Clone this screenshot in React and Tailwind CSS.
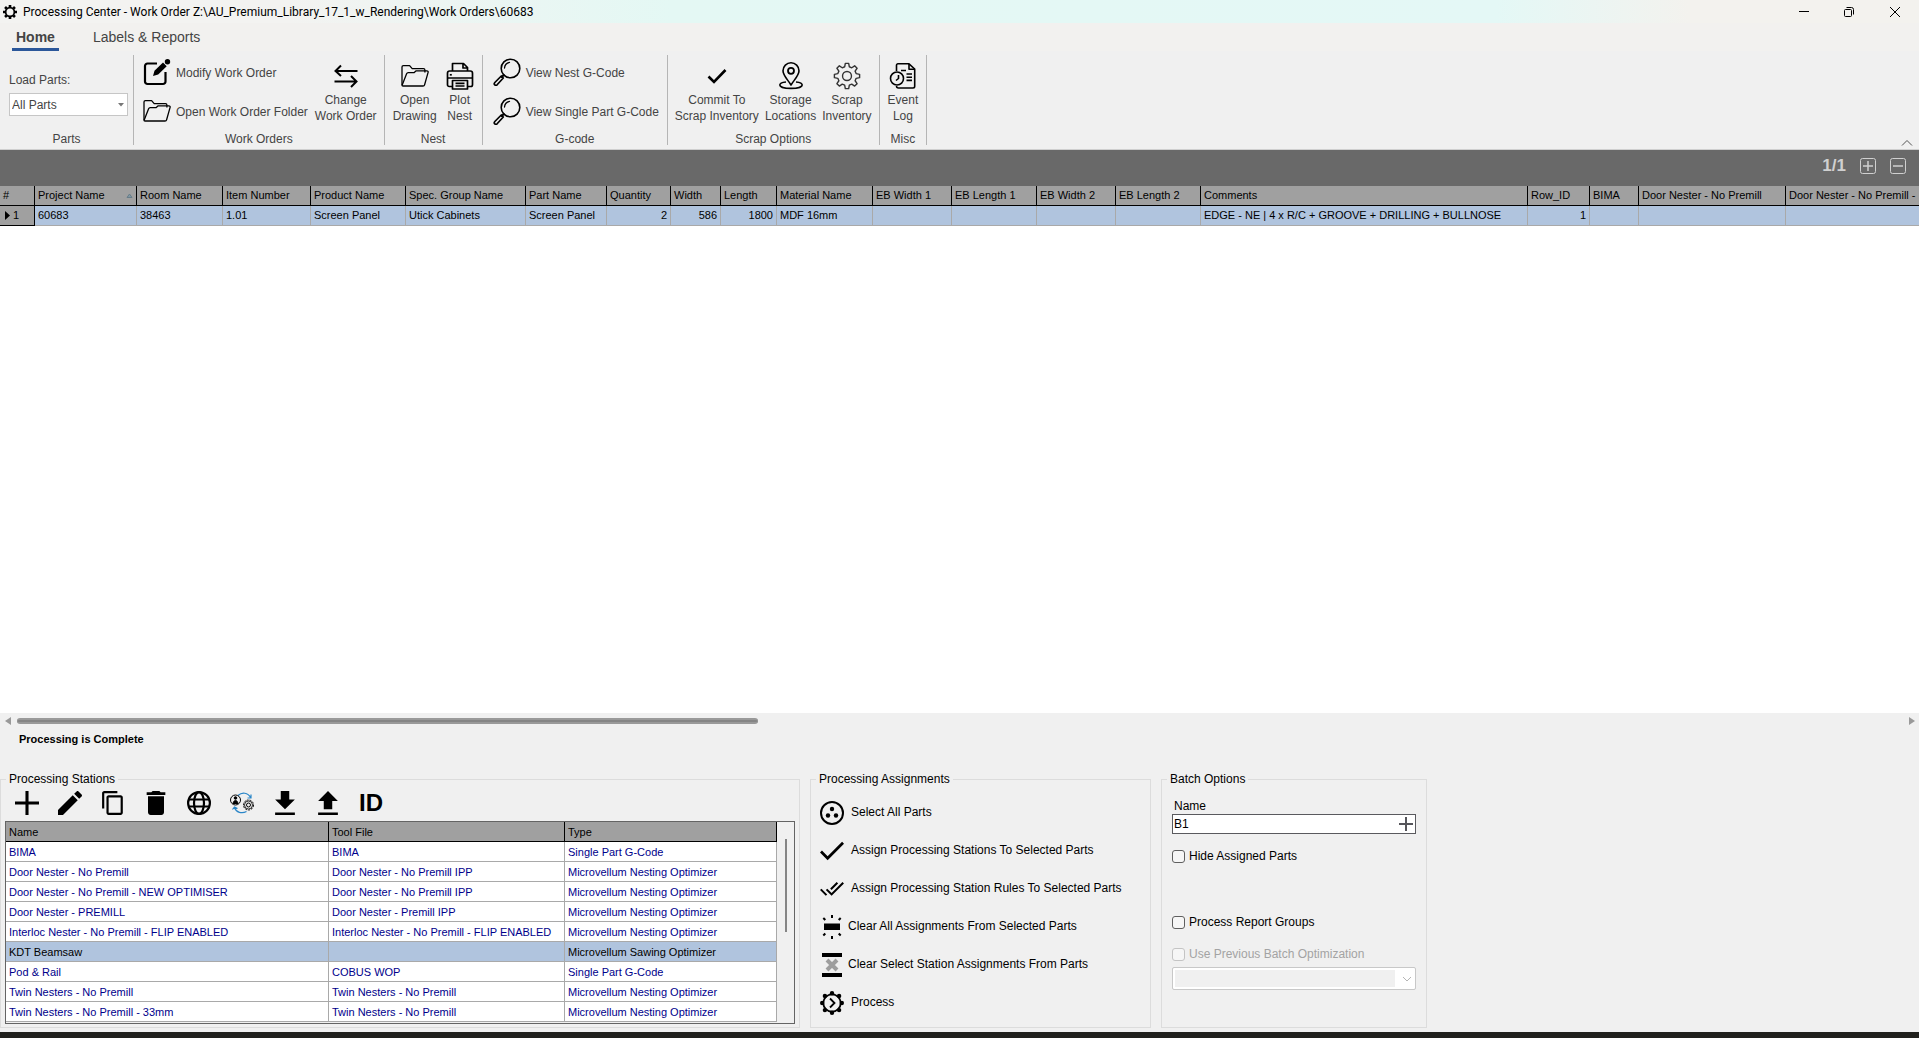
import React from "react";

const partColumns = [
  { label: "#", value: "1", width: "w-[35px]", marker: true },
  { label: "Project Name", value: "60683", width: "w-[102px]", sorted: true },
  { label: "Room Name", value: "38463", width: "w-[86px]" },
  { label: "Item Number", value: "1.01", width: "w-[88px]" },
  { label: "Product Name", value: "Screen Panel", width: "w-[95px]" },
  { label: "Spec. Group Name", value: "Utick Cabinets", width: "w-[120px]" },
  { label: "Part Name", value: "Screen Panel", width: "w-[81px]" },
  { label: "Quantity", value: "2", width: "w-[64px]", right: true },
  { label: "Width", value: "586", width: "w-[50px]", right: true },
  { label: "Length", value: "1800", width: "w-[56px]", right: true },
  { label: "Material Name", value: "MDF 16mm", width: "w-[96px]" },
  { label: "EB Width 1", value: "", width: "w-[79px]" },
  { label: "EB Length 1", value: "", width: "w-[85px]" },
  { label: "EB Width 2", value: "", width: "w-[79px]" },
  { label: "EB Length 2", value: "", width: "w-[85px]" },
  {
    label: "Comments",
    value: "EDGE - NE | 4 x R/C + GROOVE + DRILLING + BULLNOSE",
    width: "w-[327px]",
  },
  { label: "Row_ID", value: "1", width: "w-[62px]", right: true },
  { label: "BIMA", value: "", width: "w-[49px]" },
  { label: "Door Nester - No Premill", value: "", width: "w-[147px]" },
  { label: "Door Nester - No Premill -", value: "", width: "w-auto" },
];

const stations = [
  ["BIMA", "BIMA", "Single Part G-Code"],
  ["Door Nester - No Premill", "Door Nester - No Premill IPP", "Microvellum Nesting Optimizer"],
  ["Door Nester - No Premill - NEW OPTIMISER", "Door Nester - No Premill IPP", "Microvellum Nesting Optimizer"],
  ["Door Nester - PREMILL", "Door Nester - Premill IPP", "Microvellum Nesting Optimizer"],
  ["Interloc Nester - No Premill - FLIP ENABLED", "Interloc Nester - No Premill - FLIP ENABLED", "Microvellum Nesting Optimizer"],
  ["KDT Beamsaw", "", "Microvellum Sawing Optimizer"],
  ["Pod & Rail", "COBUS WOP", "Single Part G-Code"],
  ["Twin Nesters - No Premill", "Twin Nesters - No Premill", "Microvellum Nesting Optimizer"],
  ["Twin Nesters - No Premill - 33mm", "Twin Nesters - No Premill", "Microvellum Nesting Optimizer"],
];

const GEAR =
  "M13.2 1.5h3.6l.7 3.6 2.6 1.1 3.1-2.1 2.6 2.6-2.1 3.1 1.1 2.6 3.7.8v3.6l-3.7.7-1.1 2.6 2.1 3.1-2.6 2.6-3.1-2.1-2.6 1.1-.7 3.7h-3.6l-.7-3.7-2.6-1.1-3.1 2.1-2.6-2.6 2.1-3.1-1.1-2.6-3.7-.7v-3.6l3.7-.8 1.1-2.6-2.1-3.1 2.6-2.6 3.1 2.1 2.6-1.1z";

/* Icons */
const GearIcon = ({ className, strokeWidth = 1.5, children }) => (
  <svg viewBox="0 0 30 30" className={className} fill="none" stroke="currentColor" strokeWidth={strokeWidth} strokeLinejoin="round">
    <path d={GEAR} />
    {children}
  </svg>
);

const AppIcon = () => (
  <svg viewBox="0 0 24 24" className="w-[14px] h-[14px]" fill="none" stroke="currentColor">
    <circle cx="12" cy="12" r="7.5" strokeWidth="3" />
    <path d="M12 0v4M12 20v4M0 12h4M20 12h4M3.500 3.500l2.800 2.800M17.700 17.700l2.800 2.800M20.500 3.500l-2.800 2.800M6.300 17.700l-2.800 2.800" strokeWidth="4.5" />
  </svg>
);

const FolderIcon = () => (
  <svg viewBox="0 0 28 24" className="w-7 h-6" fill="none" stroke="currentColor" strokeWidth="1.3" strokeLinejoin="round">
    <path d="M1 21V3c0-.8.6-1.4 1.4-1.4h6.2l2.6 3h11.3c.8 0 1.4.6 1.4 1.4v2.500" />
    <path d="M1 21.500 5.600 9.800c.3-.8.8-1.2 1.600-1.200h6l2-1.800h10.700c1 0 1.500.7 1.200 1.600l-3.500 12.400c-.2.8-.8 1.200-1.600 1.200H2c-.6 0-1-.2-1-.5z" />
  </svg>
);

const MagnifierIcon = () => (
  <svg viewBox="0 0 28 28" className="w-7 h-7" fill="none" stroke="currentColor" strokeWidth="1.6" strokeLinecap="round">
    <circle cx="17.5" cy="10.5" r="9.3" />
    <path d="M11.500 10a6.300 6.300 0 0 1 5-5.600" strokeWidth="1.3" />
    <path d="m10.800 17-2 2" strokeWidth="2" />
    <path d="m8.300 18-6.500 6.500a1.600 1.600 0 0 0 2.300 2.300L10.300 20z" strokeWidth="1.7" strokeLinejoin="round" />
  </svg>
);

const ModifyIcon = () => (
  <svg viewBox="0 0 28 28" className="w-7 h-7" fill="none" stroke="currentColor">
    <path d="M14 5.500H4.500A2.500 2.500 0 0 0 2 8v15.500A2.500 2.500 0 0 0 4.500 26h15.500a2.500 2.500 0 0 0 2.500-2.500V14" strokeWidth="2.2" />
    <path d="m10 18 1.500-5.200L20 4.500l3.700 3.700-8.500 8.400z" fill="currentColor" stroke="none" />
    <circle cx="24.5" cy="3.7" r="2.7" fill="currentColor" stroke="none" />
  </svg>
);

const SwapIcon = () => (
  <svg viewBox="0 0 26 24" className="w-[26px] h-6" fill="none" stroke="currentColor" strokeWidth="2">
    <path d="M24.500 7H3M8 1.500 2.500 7 8 12M1.500 17.500H23M18 12l5.500 5.500L18 23" />
  </svg>
);

const PrinterIcon = () => (
  <svg viewBox="0 0 28 28" className="w-7 h-7" fill="none" stroke="currentColor" strokeWidth="1.7" strokeLinejoin="round">
    <path d="M6.500 9V1.500h11l4 4V9M17 1.500V6h4.500" />
    <path d="M6.500 24.500H3.200a1.700 1.700 0 0 1-1.700-1.700V11.200C1.500 10 2.500 9 3.700 9h20.600c1.300 0 2.200 1 2.200 2.200v11.600c0 1-.8 1.700-1.700 1.700h-3.300" />
    <path d="M1.500 16h25M6.500 18.500h15V27h-15zM9.500 21.300h9M9.500 24h9" />
    <path d="M3.800 12.800h2" />
  </svg>
);

const PinIcon = () => (
  <svg viewBox="0 0 26 28" className="w-[26px] h-7" fill="none" stroke="currentColor" strokeWidth="1.6" strokeLinejoin="round">
    <path d="M13 23c-3-5-8-9.500-8-14.200a8 8 0 0 1 16 0C21 13.500 16 18 13 23z" />
    <circle cx="13" cy="8.8" r="3" strokeWidth="1.8" />
    <path d="M8 20c-3.800.4-6.200 1.500-6.200 3 0 2 4.800 3.400 11.200 3.400S24.200 25 24.200 23c0-1.500-2.400-2.600-6.200-3" />
  </svg>
);

const EventLogIcon = () => (
  <svg viewBox="0 0 28 28" className="w-7 h-7" fill="none" stroke="currentColor" strokeWidth="1.6" strokeLinejoin="round">
    <path d="M7.500 9V3.200c0-.8.6-1.400 1.400-1.400H20l5.700 5.200v17.300c0 1-.7 1.700-1.700 1.700H9.500c-1 0-2-.8-2-2" />
    <path d="M20 2v5.200h5.500M12 8.500h5M17.500 12h5.500M17.500 15.200h5.500M17.500 18.400h5.500" />
    <circle cx="8" cy="16.5" r="6.5" />
    <path d="M9.500 13v3.500L7 18.500" />
  </svg>
);

const SyncIcon = () => (
  <svg viewBox="0 0 24 24" className="w-6 h-6" fill="none" stroke="currentColor">
    <g stroke="#2a86c8" strokeWidth="1.2">
      <path d="M8 4.500C12 .8 18 1.500 20.500 6.500M21 3.500v3.500h-3.500" />
      <path d="M16.500 20.500C12 23 6 21.500 4.500 16.500M2.500 18.500l2-2.500 3 1.500" />
    </g>
    <circle cx="5.5" cy="9" r="5" />
    <circle cx="5.5" cy="7" r="1.3" fill="currentColor" />
    <path d="M3 12.500c.5-4 4.500-4 5 0z" fill="currentColor" />
    <circle cx="18.5" cy="14" r="5" strokeDasharray="2 1" />
    <circle cx="18.5" cy="14" r="4" strokeWidth="0.8" />
    <circle cx="18.5" cy="14" r="2" />
  </svg>
);

const Glyph = ({ box, d }) => (
  <svg viewBox={box} className="w-6 h-6" fill="currentColor">
    <path d={d} />
  </svg>
);

const stationTools = [
  { label: "Add", icon: <Glyph box="5 5 14 14" d="M19 12.900h-6.100V19h-1.800v-6.100H5v-1.800h6.100V5h1.800v6.100H19z" /> },
  {
    label: "Edit",
    icon: (
      <Glyph
        box="3 3 18 18"
        d="M3 17.250V21h3.750L17.810 9.940l-3.750-3.750L3 17.250zM20.710 7.040c.39-.39.39-1.020 0-1.410l-2.340-2.340c-.39-.39-1.020-.39-1.410 0l-1.830 1.830 3.750 3.750 1.830-1.830z"
      />
    ),
  },
  {
    label: "Copy",
    icon: (
      <Glyph
        box="1 1 22 22"
        d="M16 1H4c-1.100 0-2 .9-2 2v14h2V3h12V1zm3 4H8c-1.100 0-2 .9-2 2v14c0 1.100.9 2 2 2h11c1.100 0 2-.9 2-2V7c0-1.100-.9-2-2-2zm0 16H8V7h11v14z"
      />
    ),
  },
  {
    label: "Delete",
    icon: <Glyph box="3 3 18 18" d="M6 19c0 1.100.9 2 2 2h8c1.100 0 2-.9 2-2V7H6v12zM19 4h-3.500l-1-1h-5l-1 1H5v2h14V4z" />,
  },
  {
    label: "Web",
    icon: (
      <svg viewBox="0 0 24 24" className="w-6 h-6" fill="none" stroke="currentColor" strokeWidth="2.2">
        <circle cx="12" cy="12" r="10.9" />
        <ellipse cx="12" cy="12" rx="5" ry="10.9" />
        <path d="M2 8.500h20M2 15.500h20" />
      </svg>
    ),
  },
  { label: "Sync", icon: <SyncIcon /> },
  { label: "Import", icon: <Glyph box="3.5 3 17 17" d="M19 9h-4V3H9v6H5l7 7 7-7zM5 18.300V20h14v-1.700H5z" /> },
  { label: "Export", icon: <Glyph box="3.5 3 17 17" d="M9 16h6v-6h4l-7-7-7 7h4zm-4 2.300h14V20H5z" /> },
];

const assignments = [
  {
    label: "Select All Parts",
    icon: (
      <svg viewBox="0 0 24 24" className="w-6 h-6" fill="currentColor">
        <circle cx="12" cy="12" r="11" fill="none" stroke="currentColor" strokeWidth="2" />
        <circle cx="12" cy="8" r="2.2" />
        <circle cx="8" cy="14.5" r="2.2" />
        <circle cx="16" cy="14.5" r="2.2" />
      </svg>
    ),
  },
  {
    label: "Assign Processing Stations To Selected Parts",
    icon: <Glyph box="3.4 3.5 17.6 17.6" d="M9 16.170 4.830 12l-1.420 1.410L9 19 21 7l-1.410-1.410z" />,
  },
  {
    label: "Assign Processing Station Rules To Selected Parts",
    icon: (
      <Glyph
        box="0.4 0.7 23.3 23.3"
        d="M18 7l-1.410-1.410-6.340 6.340 1.410 1.410L18 7zm4.240-1.410L11.660 16.170 7.480 12l-1.410 1.410L11.660 19l12-12-1.420-1.410zM.41 13.410 6 19l1.410-1.410L1.830 12 .41 13.410z"
      />
    ),
  },
  {
    label: "Clear All Assignments From Selected Parts",
    tight: true,
    icon: (
      <svg viewBox="0 0 24 24" className="w-6 h-6" fill="currentColor">
        <path d="M4 8.500h16V15H4zM11 0h2v3h-2zM11 21h2v3h-2z" />
        <path d="m3.300 3 2 2M20.700 3l-2 2M3.300 20.500l2-2M20.700 20.500l-2-2" stroke="currentColor" strokeWidth="2" />
      </svg>
    ),
  },
  {
    label: "Clear Select Station Assignments From Parts",
    tight: true,
    icon: (
      <svg viewBox="0 0 24 24" className="w-6 h-6" fill="currentColor">
        <path d="M2 0h20v4H2zM2 20h20v4H2z" />
        <path d="m7 7 10 10M17 7 7 17" stroke="#9e9e9e" strokeWidth="4" />
      </svg>
    ),
  },
  {
    label: "Process",
    icon: (
      <svg viewBox="0 0 24 24" className="w-6 h-6" fill="currentColor" stroke="currentColor">
        <circle cx="12" cy="12" r="8.7" fill="none" strokeWidth="1.8" />
        <g stroke="none">
          <circle cx="12" cy="2.200" r="2.2" />
          <circle cx="12" cy="21.800" r="2.2" />
          <circle cx="2.200" cy="12" r="2.2" />
          <circle cx="21.800" cy="12" r="2.2" />
          <circle cx="4.900" cy="4.900" r="2.2" />
          <circle cx="19.100" cy="4.900" r="2.2" />
          <circle cx="4.900" cy="19.100" r="2.2" />
          <circle cx="19.100" cy="19.100" r="2.2" />
        </g>
        <path d="m10 7.500 4.500 4.500-4.500 4.500" fill="none" strokeWidth="1.8" />
      </svg>
    ),
  },
];

/* Ribbon pieces */
const RibbonGroup = ({ title, className = "", children }) => (
  <section className="flex flex-col border-r border-[#b5b5b5] h-[90px]">
    <div className={`flex flex-1 ${className}`}>{children}</div>
    <h2 className="text-center leading-3">{title}</h2>
  </section>
);

const BigButton = ({ icon, lines }) => (
  <button className="flex flex-col items-center whitespace-nowrap pt-1">
    <span className="flex h-[33px] items-center justify-center text-black">{icon}</span>
    {lines.map((line) => (
      <span key={line} className="leading-4">
        {line}
      </span>
    ))}
  </button>
);

const WideButton = ({ icon, label }) => (
  <button className="flex items-center gap-[5px] whitespace-nowrap h-8">
    <span className="text-black">{icon}</span>
    <span className="pt-px">{label}</span>
  </button>
);

function TitleBar() {
  return (
    <header className="flex items-center justify-between h-[23px] bg-[linear-gradient(to_right,#f3f3f1_15%,#e4f8f4_35%,#e4f8f6_78%,#f3f2ee_88%)] text-black">
      <div className="flex items-center gap-[6px] pl-[3px]">
        <AppIcon />
        <h1 className="font-[Roboto,sans-serif] text-[12px] whitespace-nowrap">
          Processing Center - Work Order Z:\AU_Premium_Library_17_1_w_Rendering\Work Orders\60683
        </h1>
      </div>
      <div className="flex">
        <button aria-label="Minimize" className="flex w-[45px] justify-center">
          <svg viewBox="0 0 12 12" className="w-3 h-3" stroke="currentColor"><path d="M1 5.500h10" /></svg>
        </button>
        <button aria-label="Restore" className="flex w-[45px] justify-center">
          <svg viewBox="0 0 12 12" className="w-3 h-3" fill="none" stroke="currentColor">
            <rect x="1.5" y="3.5" width="7" height="7" rx="1" />
            <path d="M3.500 1.500h5a2 2 0 0 1 2 2v5" />
          </svg>
        </button>
        <button aria-label="Close" className="flex w-12 justify-center">
          <svg viewBox="0 0 12 12" className="w-3 h-3" stroke="currentColor"><path d="m1 1 10 10M11 1 1 11" /></svg>
        </button>
      </div>
    </header>
  );
}

function Ribbon() {
  return (
    <div className="relative border-b border-[#cfcfcf] bg-[#f0f0f0] text-[#444444]">
      <nav className="flex h-7 gap-[34px] bg-[#f2f1ef] pl-3 text-sm">
        <button className="border-b-3 border-[#2b579a] px-1 pt-[3px] font-bold">Home</button>
        <button className="border-b-3 border-transparent pt-[3px]">Labels &amp; Reports</button>
      </nav>
      <div className="flex pt-1 pb-1 text-[12px]">
        <RibbonGroup title="Parts" className="w-[133px] flex-col pl-[9px] pr-[5px] pt-[17px]">
          <label htmlFor="load-parts" className="leading-4">Load Parts:</label>
          <div className="relative mt-[5px]">
            <select id="load-parts" className="h-[23px] w-full appearance-none border border-[#c6c6c6] bg-white pl-[2px]">
              <option>All Parts</option>
            </select>
            <svg viewBox="0 0 6 4" className="absolute right-1 top-[10px] h-[4px] w-[6px]" fill="#777777"><path d="M0 0h6L3 3.500z" /></svg>
          </div>
        </RibbonGroup>
        <RibbonGroup title="Work Orders" className="gap-[7px] pl-[9px] pr-[7px]">
          <div className="flex flex-col gap-[7px] pt-px">
            <WideButton icon={<ModifyIcon />} label="Modify Work Order" />
            <WideButton icon={<FolderIcon />} label="Open Work Order Folder" />
          </div>
          <BigButton icon={<SwapIcon />} lines={["Change", "Work Order"]} />
        </RibbonGroup>
        <RibbonGroup title="Nest" className="gap-[9px] px-2">
          <BigButton icon={<FolderIcon />} lines={["Open", "Drawing"]} />
          <BigButton icon={<PrinterIcon />} lines={["Plot", "Nest"]} />
        </RibbonGroup>
        <RibbonGroup title="G-code" className="flex-col gap-[7px] pl-[10px] pr-2 pt-px">
          <WideButton icon={<MagnifierIcon />} label="View Nest G-Code" />
          <WideButton icon={<MagnifierIcon />} label="View Single Part G-Code" />
        </RibbonGroup>
        <RibbonGroup title="Scrap Options" className="gap-[6px] px-[7px]">
          <BigButton
            icon={<svg viewBox="0 0 20 16" className="w-5 h-4" fill="none" stroke="currentColor" strokeWidth="2.6"><path d="m1.500 8.500 5.500 5.500L18.500 2" /></svg>}
            lines={["Commit To", "Scrap Inventory"]}
          />
          <BigButton icon={<PinIcon />} lines={["Storage", "Locations"]} />
          <BigButton
            icon={<GearIcon className="w-7 h-7 text-[#333333]"><circle cx="15" cy="15" r="4.8" /></GearIcon>}
            lines={["Scrap", "Inventory"]}
          />
        </RibbonGroup>
        <RibbonGroup title="Misc" className="justify-center px-2">
          <BigButton icon={<EventLogIcon />} lines={["Event", "Log"]} />
        </RibbonGroup>
      </div>
      <button aria-label="Collapse ribbon" className="absolute right-1.5 bottom-[3px]">
        <svg viewBox="0 0 12 6" className="w-3 h-1.5" fill="none" stroke="#555555"><path d="m1 5.500 5-5 5 5" /></svg>
      </button>
    </div>
  );
}

function PartsGrid() {
  return (
    <main className="flex min-h-0 flex-1 flex-col bg-white">
      <div className="flex h-9 shrink-0 items-center justify-end gap-[14px] bg-[#696969] pr-[13px] pb-1 text-[#d0d0d0]">
        <span className="font-bold text-[17px]">1/1</span>
        <button aria-label="Expand all">
          <svg viewBox="0 0 16 16" className="w-4 h-4" fill="none" stroke="currentColor"><rect x="0.5" y="0.5" width="15" height="15" rx="2" /><path d="M3 8h10M8 3v10" strokeWidth="1.5" /></svg>
        </button>
        <button aria-label="Collapse all">
          <svg viewBox="0 0 16 16" className="w-4 h-4" fill="none" stroke="currentColor"><rect x="0.5" y="0.5" width="15" height="15" rx="2" /><path d="M3 8h10" strokeWidth="1.5" /></svg>
        </button>
      </div>
      <div className="min-h-0 flex-1 overflow-hidden">
        <table className="w-full table-fixed border-separate border-spacing-0 whitespace-nowrap text-left text-[11px] text-black">
          <thead>
            <tr className="h-5 bg-[#a0a0a0]">
              {partColumns.map((col) => (
                <th key={col.label} className={`${col.width} border-r border-b border-black px-[3px] font-normal last:border-r-0`}>
                  <span className="flex items-center justify-between">
                    {col.label}
                    {col.sorted && (
                      <svg viewBox="0 0 7 5" className="w-[7px] h-[5px]" fill="#8298a4" stroke="#667c88"><path d="m1 4.500 2.500-3.500L6 4.500z" /></svg>
                    )}
                  </span>
                </th>
              ))}
            </tr>
          </thead>
          <tbody>
            <tr className="h-5 bg-[#b0c4de]">
              {partColumns.map((col) =>
                col.marker ? (
                  <td key={col.label} className="border-r border-b border-black bg-[#a0a0a0] pl-[5px]">
                    <span className="flex items-center gap-[3px]">
                      <svg viewBox="0 0 5 9" className="w-[5px] h-[9px]"><path d="M0 0l5 4.500L0 9z" /></svg>
                      {col.value}
                    </span>
                  </td>
                ) : (
                  <td key={col.label} className={`border-r border-b border-[#a9a9a9] px-[3px] last:border-r-0 ${col.right ? "text-right" : ""}`}>
                    {col.value}
                  </td>
                )
              )}
            </tr>
          </tbody>
        </table>
      </div>
    </main>
  );
}

function StationsTable() {
  return (
    <div className="flex h-[203px] overflow-hidden border border-[#646464]">
      <div className="min-w-0 flex-1">
        <table className="w-full table-fixed border-separate border-spacing-0 whitespace-nowrap text-left text-[11px]">
          <thead>
            <tr className="h-5 bg-[#a0a0a0] text-black">
              <th className="w-[323px] border-r border-b border-black px-[3px] pt-px font-normal">Name</th>
              <th className="w-[236px] border-r border-b border-black px-[3px] pt-px font-normal">Tool File</th>
              <th className="border-r border-b border-black px-[3px] pt-px font-normal">Type</th>
            </tr>
          </thead>
          <tbody>
            {stations.map((row) => (
              <tr key={row[0]} className={row[0] === "KDT Beamsaw" ? "h-5 bg-[#b0c4de] text-black" : "h-5 bg-white text-[#00008b]"}>
                {row.map((cell, i) => (
                  <td key={i} className="border-r border-b border-[#a9a9a9] px-[3px] pt-px">{cell}</td>
                ))}
              </tr>
            ))}
          </tbody>
        </table>
      </div>
      <div className="flex w-[17px] justify-center pt-[17px]">
        <div className="h-[93px] w-[2px] bg-[#858585]" />
      </div>
    </div>
  );
}

const Group = ({ title, className, children }) => (
  <fieldset className={`h-[257px] min-w-0 border border-[#dcdcdc] ${className}`}>
    <legend className="ml-[5px] px-[3px] leading-4">{title}</legend>
    {children}
  </fieldset>
);

const CheckRow = ({ id, label, disabled }) => (
  <div className={`flex h-4 items-center gap-1 ${disabled ? "text-[#a3a3a3]" : ""}`}>
    <input
      id={id}
      type="checkbox"
      disabled={disabled}
      className={`h-[13px] w-[13px] appearance-none rounded-[3px] border bg-[#f6f6f6] ${disabled ? "border-[#c4c4c4]" : "border-[#5f5f5f]"}`}
    />
    <label htmlFor={id}>{label}</label>
  </div>
);

function BottomPanels() {
  return (
    <div className="flex pb-1 text-[12px] text-black">
      <Group title="Processing Stations" className="mr-[10px] w-[800px]">
        <div className="px-1">
          <div className="flex h-[34px] items-start gap-[19px] pl-[10px] pt-1">
            {stationTools.map((tool) => (
              <button key={tool.label} aria-label={tool.label}>{tool.icon}</button>
            ))}
            <button className="text-2xl leading-6 font-bold">ID</button>
          </div>
          <StationsTable />
        </div>
      </Group>
      <Group title="Processing Assignments" className="mr-[10px] w-[341px]">
        <div className="flex flex-col gap-[14px] pl-[9px] pt-[14px]">
          {assignments.map((item) => (
            <button key={item.label} className={`flex items-center whitespace-nowrap ${item.tight ? "gap-1" : "gap-[7px]"}`}>
              {item.icon}
              <span className="pb-[2px]">{item.label}</span>
            </button>
          ))}
        </div>
      </Group>
      <Group title="Batch Options" className="w-[266px]">
        <div className="px-[10px] pt-[11px]">
          <label htmlFor="batch-name" className="ml-[2px] block leading-4">Name</label>
          <div className="relative">
            <input id="batch-name" defaultValue="B1" className="h-5 w-full border border-[#5a5a5e] bg-white pl-px" />
            <button aria-label="Add batch" className="absolute right-[3px] top-[3px]">
              <svg viewBox="0 0 14 14" className="w-[14px] h-[14px]" stroke="#55555a" strokeWidth="2"><path d="M0 7h14M7 0v14" /></svg>
            </button>
          </div>
          <div className="mt-[14px] flex flex-col">
            <CheckRow id="hide-assigned" label="Hide Assigned Parts" />
            <div className="mt-[50px] mb-4">
              <CheckRow id="report-groups" label="Process Report Groups" />
            </div>
            <CheckRow id="previous-batch" label="Use Previous Batch Optimization" disabled />
          </div>
          <div className="relative mt-[5px]">
            <select aria-label="Previous batch" disabled className="h-[23px] w-full appearance-none rounded-[2px] border-[#c8c8c8] border bg-[#f0f0f0] shadow-[inset_0_0_0_2px_white,inset_-20px_0_0_white]" />
            <svg viewBox="0 0 10 6" className="absolute right-1 top-[9px] h-[6px] w-[10px]" fill="none" stroke="#b5b5b5"><path d="m1 1 4 4 4-4" /></svg>
          </div>
        </div>
      </Group>
    </div>
  );
}

export default function App() {
  return (
    <div className="flex h-screen flex-col overflow-hidden bg-[#f0f0f0] font-['Liberation_Sans',Arial,sans-serif]">
      <TitleBar />
      <Ribbon />
      <PartsGrid />
      <div className="flex h-4 items-center justify-between pl-[5px] pr-1">
        <svg viewBox="0 0 6 8" className="w-[6px] h-2" fill="#999999"><path d="M6 0v8L0 4z" /></svg>
        <div className="mx-1.5 flex-1">
          <div className="h-1.5 w-[39.3%] rounded-full border-y-2 border-[#999999] bg-[#858585]" />
        </div>
        <svg viewBox="0 0 6 8" className="w-[6px] h-2" fill="#999999"><path d="M0 0v8l6-4z" /></svg>
      </div>
      <p className="h-[42px] pl-[19px] pt-[2px] text-[11px] leading-4 font-bold text-black">Processing is Complete</p>
      <BottomPanels />
      <footer className="h-[6px] shrink-0 bg-[#21211d]" />
    </div>
  );
}
